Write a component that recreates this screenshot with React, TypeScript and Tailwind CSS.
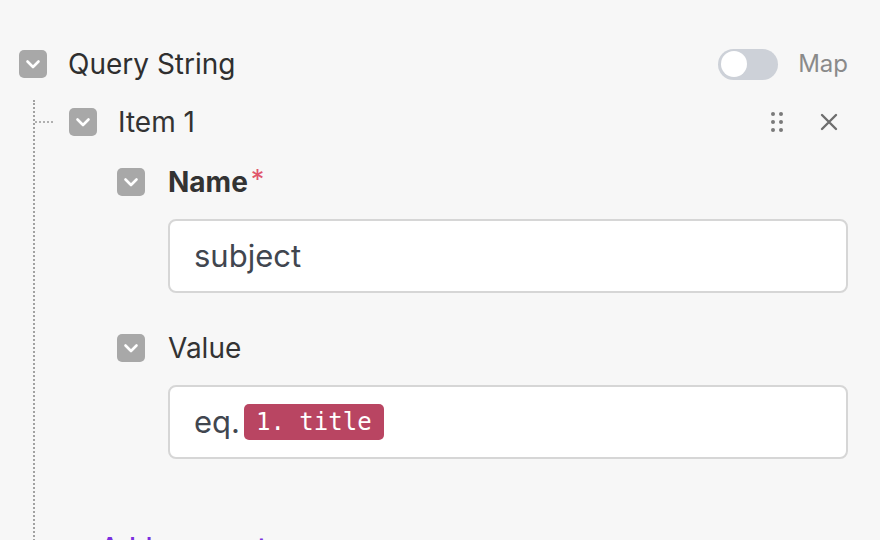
import React from "react"

const font = { fontFamily: "Inter, 'Noto Sans', sans-serif" }

function Collapse() {
  return (
    <div className="w-[28px] h-[28px] shrink-0 rounded-[5px] bg-[#a8a8a8] flex items-center justify-center">
      <svg width="28" height="28" viewBox="0 0 28 28" fill="none">
        <path d="M8.5 11.5 L14 17 L19.5 11.5" stroke="white" strokeWidth="2.6" strokeLinecap="round" strokeLinejoin="round" />
      </svg>
    </div>
  )
}

function DragDots() {
  return (
    <svg width="14" height="22" viewBox="0 0 14 22" fill="#7a7a7a">
      {[3, 11, 19].map((y) => (
        <React.Fragment key={y}>
          <circle cx="3" cy={y} r="2" />
          <circle cx="11" cy={y} r="2" />
        </React.Fragment>
      ))}
    </svg>
  )
}

function CloseIcon() {
  return (
    <svg width="18" height="18" viewBox="0 0 18 18" fill="none">
      <path d="M2 2 L16 16 M16 2 L2 16" stroke="#6e6e6e" strokeWidth="2.4" strokeLinecap="round" />
    </svg>
  )
}

function Field({ label, required, children }: { label: string; required?: boolean; children: React.ReactNode }) {
  return (
    <div className="flex gap-[23px]">
      <Collapse />
      <div className="flex-1 flex flex-col">
        <div className="h-[28px] flex items-center">
          <span className={`text-[28px] leading-none text-[#333] ${required ? "font-bold" : ""}`}>{label}</span>
          {required && <span className="text-[27px] text-[#e0566b] ml-[3px] -mt-[6px] leading-none">*</span>}
        </div>
        <div className="mt-[23px] h-[74px] bg-white border-2 border-[#d6d6d6] rounded-[8px] flex items-center pl-[24px] text-[31px] text-[#41464f]">
          {children}
        </div>
      </div>
    </div>
  )
}

export default function App() {
  return (
    <div className="w-[880px] h-[540px] overflow-hidden bg-[#f7f7f7] pt-[50px] pl-[19px] pr-[32px]" style={font}>
      <div className="h-[28px] flex items-center">
        <Collapse />
        <span className="ml-[21px] text-[28px] text-[#2f2f2f] leading-none">Query String</span>
        <div className="ml-auto w-[60px] h-[31px] rounded-full bg-[#cdd1d8] p-[3px] flex items-center">
          <div className="w-[26px] h-[26px] rounded-full bg-white" />
        </div>
        <span className="ml-[20px] text-[24px] text-[#8a8a8a] leading-none">Map</span>
      </div>

      <div className="ml-[14px] mt-[22px] border-l-2 border-dotted border-[#a2a2a2] pt-[8px] h-[600px]">
        <div className="h-[28px] flex items-center">
          <div className="w-[18px] border-t-2 border-dotted border-[#b0b0b0]" />
          <div className="ml-[16px]">
            <Collapse />
          </div>
          <span className="ml-[21px] text-[28px] text-[#333] leading-none">Item 1</span>
          <div className="ml-auto flex items-center gap-[36px] mr-[10px]">
            <DragDots />
            <CloseIcon />
          </div>
        </div>

        <div className="pl-[82px] mt-[32px] flex flex-col gap-[41px]">
          <Field label="Name" required>
            subject
          </Field>
          <Field label="Value">
            <span>eq.</span>
            <span
              className="ml-[4px] h-[36px] px-[12px] rounded-[5px] bg-[#b94562] text-white text-[24px] flex items-center"
              style={{ fontFamily: "'DejaVu Sans Mono', 'Liberation Mono', monospace" }}
            >
              1. title
            </span>
          </Field>
        </div>

        <div className="mt-[75px] pl-[40px] text-[27px] leading-[28px] text-[#7b2fe0] font-medium">+ Add parameter</div>
      </div>
    </div>
  )
}
